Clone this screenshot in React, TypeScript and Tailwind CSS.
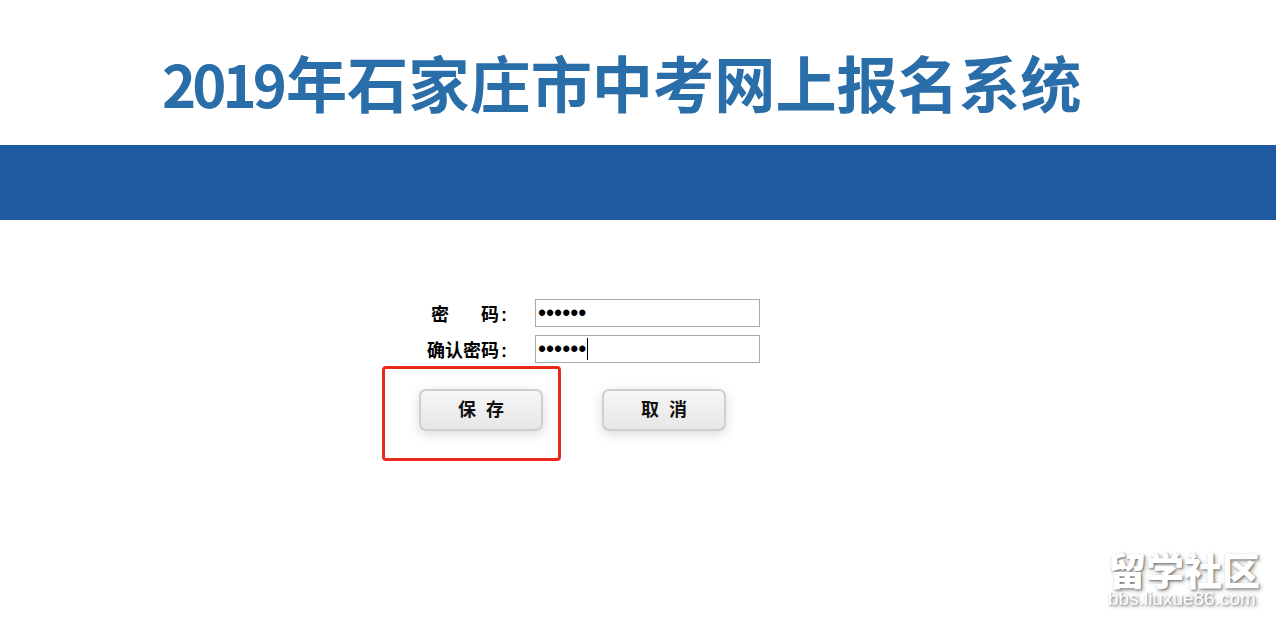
const cjk = "font-['Liberation_Sans','Noto_Sans_CJK_SC',sans-serif]";

function PasswordRow({ label, gapLabel, caret }: { label: string; gapLabel?: string; caret?: boolean }) {
  return (
    <div className="flex items-center h-7">
      <label className="w-[135px] pr-[28px] pt-[3px] flex justify-end text-[18px] leading-7 font-bold text-black">
        {gapLabel ? <span>{gapLabel}</span> : null}
        <span className={gapLabel ? 'ml-[32px]' : ''}>{label}</span>
        <span className="ml-[2px]">:</span>
      </label>
      <div className="relative">
        <input
          type="password"
          readOnly
          value="123456"
          className="block w-[225px] h-7 pl-[2px] pt-[1px] border border-[#a9a9a9] bg-white text-black text-[23px] outline-none font-['Liberation_Sans']"
        />
        {caret && <div className="absolute left-[52px] top-[3px] w-px h-[22px] bg-black" />}
      </div>
    </div>
  );
}

function ActionButton({ children }: { children: string }) {
  return (
    <button className="w-[124px] h-[42px] rounded-[7px] border-2 border-[#cfcfcf] bg-gradient-to-b from-[#f6f6f6] to-[#e7e7e7] shadow-[0_3px_12px_rgba(0,0,0,0.15)] text-[18px] font-bold text-[#111] whitespace-pre">
      {children}
    </button>
  );
}

export default function App() {
  return (
    <div className={`relative w-full h-[621px] overflow-hidden bg-white ${cjk}`}>
      <header className="h-[145px] pt-[44px] pl-[162px]">
        <h1 className="text-[61.2px] leading-[76px] font-bold text-[#2a6ea9] whitespace-nowrap font-['Noto_Sans_CJK_SC',sans-serif]">
          <span className="tracking-[-4px] mr-[3px] text-[58px]">2019</span>年石家庄市中考网上报名系统
        </h1>
      </header>
      <div className="h-[75px] bg-[#1e5a9f]" />

      <form className="pt-[79px] pl-[400px] flex flex-col gap-2">
        <PasswordRow gapLabel="密" label="码" />
        <PasswordRow label="确认密码" caret />
        <div className="flex gap-[59px] pl-[19px] pt-[18px]">
          <ActionButton>{'保  存'}</ActionButton>
          <ActionButton>{'取  消'}</ActionButton>
        </div>
      </form>

      {/* red annotation drawn over the screenshot */}
      <div className="absolute left-[382px] top-[366px] w-[179px] h-[95px] border-[3px] border-[#e8291c] rounded-[4px]" />

      {/* watermark */}
      <div className="absolute left-[1108px] top-[550px] w-[156px] text-white [text-shadow:1px_1px_2px_rgba(0,0,0,0.4),2px_2px_4px_rgba(0,0,0,0.3)]">
        <div className="text-[38px] leading-[38px] font-black whitespace-nowrap font-['Noto_Sans_CJK_SC',sans-serif]">留学社区</div>
        <div className="mt-[2px] text-[19px] leading-[18px] whitespace-nowrap">bbs.liuxue86.com</div>
      </div>
    </div>
  );
}
